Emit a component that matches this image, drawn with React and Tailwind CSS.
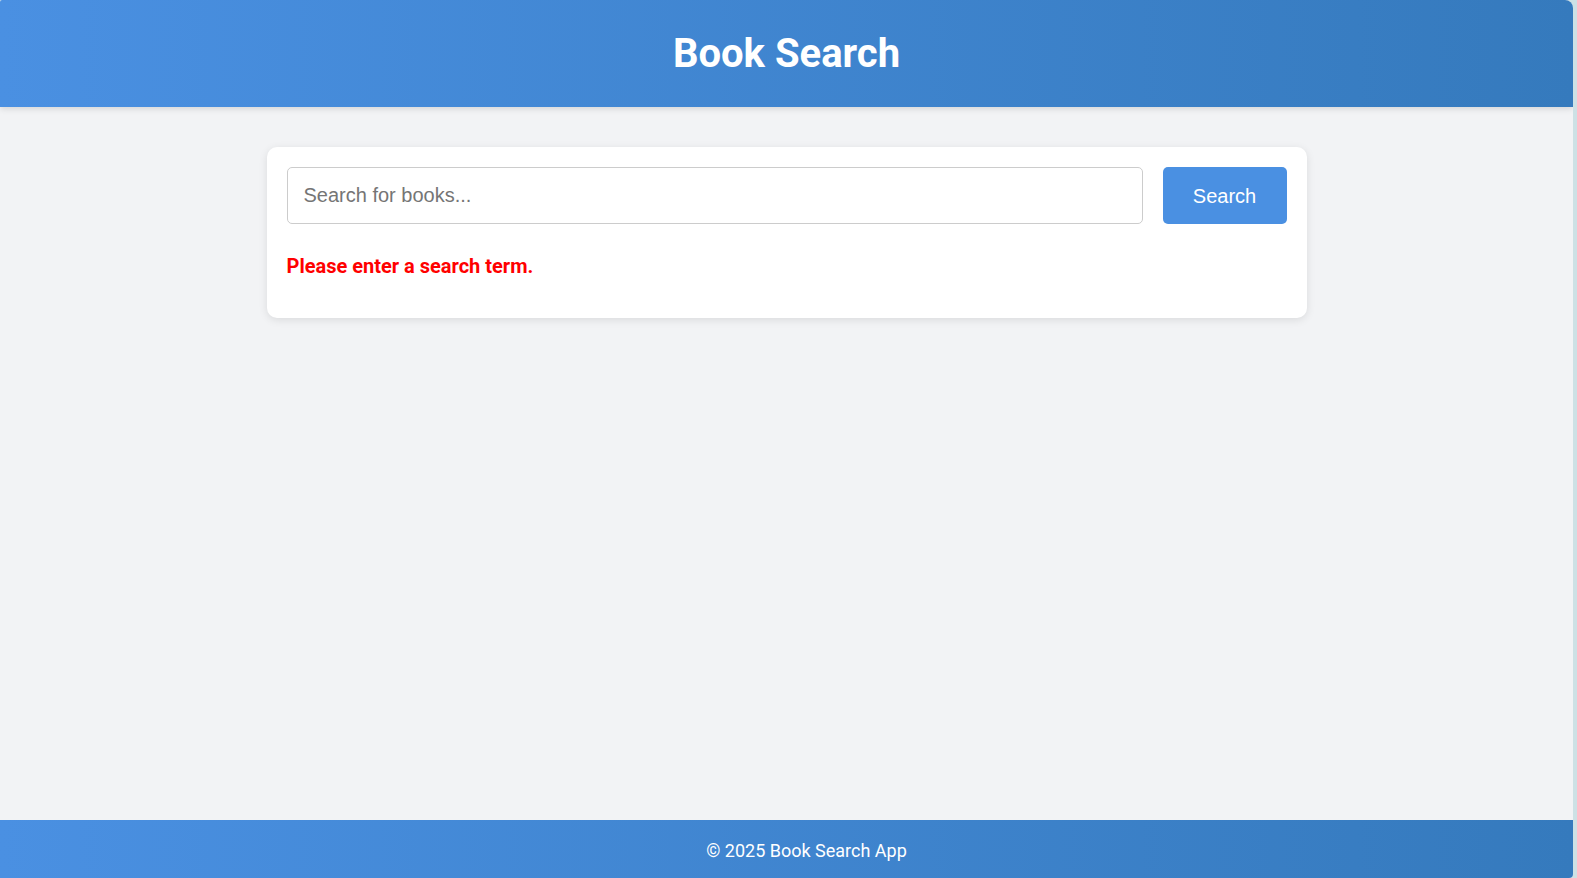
import { useState } from "react";

export default function App() {
    const [query, setQuery] = useState("");
    const [error, setError] = useState("Please enter a search term.");

    const handleSearch = () => {
        if (!query.trim()) {
            setError("Please enter a search term.");
            return;
        }
        setError("");
    };

    return (
        <div className="flex min-h-[878px] w-full bg-[#cde1e5]">
            <div className="flex flex-col w-[1573px] min-h-[878px] bg-[#f2f3f5] rounded-tr-lg rounded-br-sm rounded-tl-[2px] overflow-hidden font-['Roboto',sans-serif]">

                {/* Header */}
                <header className="relative z-10 h-[107px] flex items-center justify-center bg-gradient-to-r from-[#4a90e2] to-[#357abd] shadow-[0_2px_6px_rgba(0,0,0,0.12)]">
                    <h1 className="text-white text-[40px] leading-none font-bold">
                        Book Search
                    </h1>
                </header>

                {/* Main */}
                <main className="flex-1 px-5 pt-10">
                    <div className="w-[1040px] mx-auto bg-white rounded-[10px] p-5 pb-10 shadow-[0_2px_8px_rgba(0,0,0,0.1)]">
                        <div className="flex gap-5">
                            <input
                                value={query}
                                onChange={(e) => setQuery(e.target.value)}
                                placeholder="Search for books..."
                                className="flex-1 h-[57px] px-4 border border-[#ccc] rounded-[5px] text-xl text-[#333] placeholder:text-[#757575] font-['Liberation_Sans',Arial,sans-serif] outline-none"
                            />
                            <button
                                onClick={handleSearch}
                                className="w-[124px] h-[57px] bg-[#4a90e2] text-white text-xl rounded-[5px] font-['Liberation_Sans',Arial,sans-serif]"
                            >
                                Search
                            </button>
                        </div>

                        {error && (
                            <p className="mt-[30px] text-[#ff0000] text-xl font-bold leading-[24px]">
                                {error}
                            </p>
                        )}
                    </div>
                </main>

                {/* Footer */}
                <footer className="h-[58px] flex items-center justify-center pl-10 pt-[3px] bg-gradient-to-r from-[#4a90e2] to-[#357abd]">
                    <p className="text-white text-lg">
                        © 2025 Book Search App
                    </p>
                </footer>
            </div>
        </div>
    );
}
